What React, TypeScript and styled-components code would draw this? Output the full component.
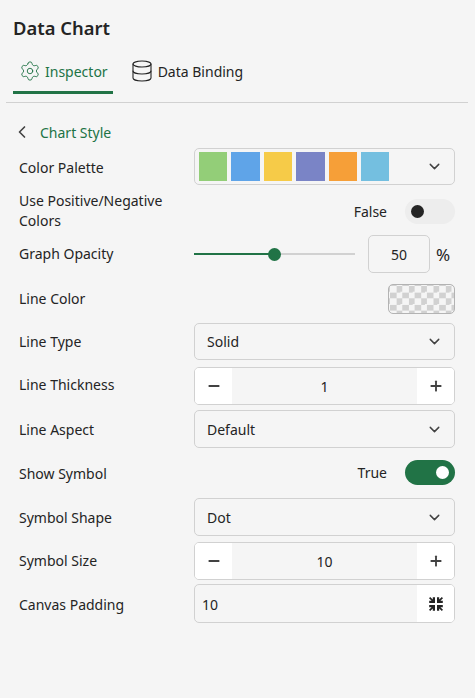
import { Minus, Plus, ChevronDown, ChevronLeft, Settings, Database } from "lucide-react";
import styled, { createGlobalStyle } from "styled-components";

const GlobalStyle = createGlobalStyle`
  html, body {
    margin: 0;
    background: #f5f5f5;
  }
  body {
    font-family: "Noto Sans", "Open Sans", sans-serif;
    color: #242424;
  }
`;

const Panel = styled.div`
  width: 475px;
  height: 698px;
  box-sizing: border-box;
  padding-top: 15px;
  overflow: hidden;
`;

const Title = styled.h1`
  margin: 0 0 0 13px;
  font-size: 18.4px;
  line-height: 25px;
  font-weight: 600;
`;

const Tabs = styled.div`
  display: flex;
  margin: 11px 7px 0 6px;
  padding-left: 7px;
  height: 52px;
  box-sizing: border-box;
  border-bottom: 1px solid #d1d1d1;
  gap: 11px;
`;

const Tab = styled.div<{ $active?: boolean }>`
  display: flex;
  align-items: center;
  gap: 4px;
  height: 43px;
  box-sizing: border-box;
  padding: 0 5px 0 6px;
  font-size: 14px;
  color: ${(p) => (p.$active ? "#217346" : "#242424")};
  border-bottom: 3px solid ${(p) => (p.$active ? "#217346" : "transparent")};
`;

const Back = styled.div`
  display: flex;
  align-items: center;
  gap: 8px;
  margin: 17px 0 0 12px;
  height: 24px;
  font-size: 14px;
  color: #217346;
  svg {
    color: #424242;
  }
`;

const Form = styled.div`
  display: flex;
  flex-direction: column;
  margin: 4px 20px 0 19px;
`;

const Row = styled.div<{ $h: number; $mt?: number }>`
  display: grid;
  grid-template-columns: 175px 261px;
  align-items: center;
  height: ${(p) => p.$h}px;
  margin-top: ${(p) => p.$mt ?? 0}px;
`;

const Label = styled.div<{ $top?: number; $bottom?: number }>`
  font-size: 14px;
  line-height: 20px;
  margin-top: ${(p) => p.$top ?? 0}px;
  margin-bottom: ${(p) => p.$bottom ?? 0}px;
`;

const Box = styled.div`
  display: flex;
  align-items: center;
  box-sizing: border-box;
  height: 100%;
  border: 1px solid #d1d1d1;
  border-radius: 5px;
  font-size: 14px;
  overflow: hidden;
`;

const Select = styled(Box)`
  justify-content: space-between;
  padding: 0 11px 0 12px;
  svg {
    color: #424242;
  }
`;

const Swatches = styled.div`
  display: flex;
  gap: 4px;
  margin-left: -8px;
`;

const Swatch = styled.div<{ $color: string }>`
  width: 28.4px;
  height: 29px;
  background: ${(p) => p.$color};
`;

const EndAligned = styled.div`
  display: flex;
  justify-content: flex-end;
  align-items: center;
  gap: 18px;
  font-size: 14px;
`;

const Toggle = styled.div<{ $on?: boolean }>`
  display: flex;
  align-items: center;
  justify-content: ${(p) => (p.$on ? "flex-end" : "flex-start")};
  width: 50px;
  height: 25px;
  box-sizing: border-box;
  padding: 0 6px;
  border-radius: 13px;
  background: ${(p) => (p.$on ? "#217346" : "#ededed")};
`;

const Knob = styled.div<{ $on?: boolean }>`
  width: 13px;
  height: 13px;
  border-radius: 50%;
  background: ${(p) => (p.$on ? "#ffffff" : "#242424")};
`;

const SliderCell = styled.div`
  display: flex;
  align-items: center;
`;

const Track = styled.div`
  position: relative;
  width: 161px;
  height: 2px;
  background: #d1d1d1;
  margin-right: 13px;
`;

const Fill = styled.div`
  height: 100%;
  background: #217346;
`;

const Thumb = styled.div`
  position: absolute;
  top: -5.5px;
  width: 13px;
  height: 13px;
  border-radius: 50%;
  background: #217346;
`;

const Percent = styled(Box)`
  justify-content: center;
  width: 62px;
  height: 38px;
  margin-right: 6px;
`;

const Unit = styled.span`
  font-size: 17px;
`;

const Checker = styled.div`
  justify-self: end;
  width: 67px;
  height: 30px;
  box-sizing: border-box;
  border: 1px solid #b3b3b3;
  border-radius: 5px;
  background-color: #f5f5f5;
  background-image: conic-gradient(#d1d1d1 25%, #f5f5f5 0 50%, #d1d1d1 0 75%, #f5f5f5 0);
  background-size: 12.3px 12.3px;
  background-position: 1px 1px;
`;

const StepButton = styled.div`
  display: flex;
  align-items: center;
  justify-content: center;
  width: 37px;
  height: 100%;
  background: #ffffff;
  flex-shrink: 0;
  svg {
    color: #424242;
  }
`;

const StepValue = styled.div`
  flex: 1;
  text-align: center;
`;

const PaddingValue = styled.div`
  flex: 1;
  padding: 2px 0 0 7px;
`;

const palette = ["#93ce78", "#5fa4e8", "#f6cb48", "#7a84c6", "#f69f38", "#74bfe0"];

const CollapseIcon = () => (
  <svg width="16" height="16" viewBox="0 0 16 16" fill="#242424">
    <path d="M1 2.2 L2.2 1 L4.8 3.6 L4.8 1.2 L7 1.2 L7 7 L1.2 7 L1.2 4.8 L3.6 4.8 Z" />
    <path d="M15 2.2 L13.8 1 L11.2 3.6 L11.2 1.2 L9 1.2 L9 7 L14.8 7 L14.8 4.8 L12.4 4.8 Z" />
    <path d="M1 13.8 L2.2 15 L4.8 12.4 L4.8 14.8 L7 14.8 L7 9 L1.2 9 L1.2 11.2 L3.6 11.2 Z" />
    <path d="M15 13.8 L13.8 15 L11.2 12.4 L11.2 14.8 L9 14.8 L9 9 L14.8 9 L14.8 11.2 L12.4 11.2 Z" />
  </svg>
);

const Stepper = ({ value }: { value: string }) => (
  <Box>
    <StepButton>
      <Minus size={16} strokeWidth={2.8} />
    </StepButton>
    <StepValue>{value}</StepValue>
    <StepButton>
      <Plus size={16} strokeWidth={2.8} />
    </StepButton>
  </Box>
);

const Dropdown = ({ value }: { value: string }) => (
  <Select>
    {value}
    <ChevronDown size={17} strokeWidth={2} />
  </Select>
);

const App = () => {
  return (
    <Panel>
      <GlobalStyle />
      <Title>Data Chart</Title>
      <Tabs>
        <Tab $active>
          <Settings size={22} strokeWidth={1} />
          Inspector
        </Tab>
        <Tab>
          <Database size={24} strokeWidth={1.1} />
          Data Binding
        </Tab>
      </Tabs>
      <Back>
        <ChevronLeft size={20} strokeWidth={2} />
        Chart Style
      </Back>
      <Form>
        <Row $h={37}>
          <Label $top={2}>Color Palette</Label>
          <Select>
            <Swatches>
              {palette.map((c) => (
                <Swatch key={c} $color={c} />
              ))}
            </Swatches>
            <ChevronDown size={17} strokeWidth={2} />
          </Select>
        </Row>
        <Row $h={40} $mt={6}>
          <Label>
            Use Positive/Negative
            <br />
            Colors
          </Label>
          <EndAligned>
            False
            <Toggle>
              <Knob />
            </Toggle>
          </EndAligned>
        </Row>
        <Row $h={38} $mt={4}>
          <Label>Graph Opacity</Label>
          <SliderCell>
            <Track>
              <Fill style={{ width: "50%" }} />
              <Thumb style={{ left: 74 }} />
            </Track>
            <Percent>50</Percent>
            <Unit>%</Unit>
          </SliderCell>
        </Row>
        <Row $h={30} $mt={11}>
          <Label>Line Color</Label>
          <Checker />
        </Row>
        <Row $h={37} $mt={9}>
          <Label>Line Type</Label>
          <Dropdown value="Solid" />
        </Row>
        <Row $h={38} $mt={7}>
          <Label $bottom={2}>Line Thickness</Label>
          <Stepper value="1" />
        </Row>
        <Row $h={38} $mt={5}>
          <Label $top={2}>Line Aspect</Label>
          <Dropdown value="Default" />
        </Row>
        <Row $h={25} $mt={12}>
          <Label $top={2}>Show Symbol</Label>
          <EndAligned>
            True
            <Toggle $on>
              <Knob $on />
            </Toggle>
          </EndAligned>
        </Row>
        <Row $h={38} $mt={13}>
          <Label $top={2}>Symbol Shape</Label>
          <Dropdown value="Dot" />
        </Row>
        <Row $h={38} $mt={6}>
          <Label>Symbol Size</Label>
          <Stepper value="10" />
        </Row>
        <Row $h={39} $mt={4}>
          <Label $top={2}>Canvas Padding</Label>
          <Box>
            <PaddingValue>10</PaddingValue>
            <StepButton>
              <CollapseIcon />
            </StepButton>
          </Box>
        </Row>
      </Form>
    </Panel>
  );
};

export default App;
